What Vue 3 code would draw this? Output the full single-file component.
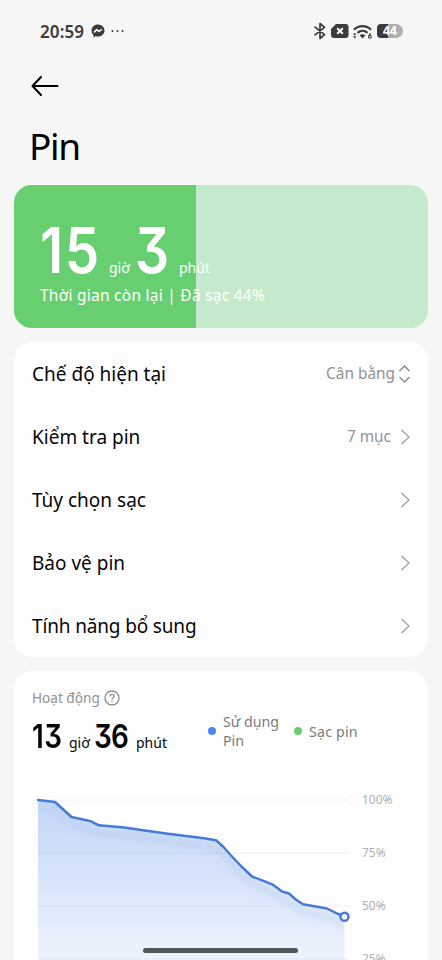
<script setup>
const level = 44

const rows = [
  { label: 'Chế độ hiện tại', value: 'Cân bằng', kind: 'select' },
  { label: 'Kiểm tra pin', value: '7 mục', kind: 'link' },
  { label: 'Tùy chọn sạc', value: '', kind: 'link' },
  { label: 'Bảo vệ pin', value: '', kind: 'link' },
  { label: 'Tính năng bổ sung', value: '', kind: 'link' },
]

const points = [
  [24, 20], [41, 22], [57.5, 37], [77, 41.3], [85, 45.3], [110, 47.6], [150, 53.3], [190, 58.2],
  [202, 60.3], [209, 66.5], [217, 75.5], [227, 86], [238, 96.5], [259, 104.7], [268, 111.5],
  [275, 113.5], [282, 119.7], [289, 124.3], [313, 128.5], [323, 133.5], [330.5, 136.7],
]
const line = 'M' + points.map((p) => p.join(' ')).join('L')
const area = line + 'V200H24Z'
const grid = [
  { y: 20, label: '100%' },
  { y: 73, label: '75%' },
  { y: 126, label: '50%' },
  { y: 179, label: '25%' },
]
</script>

<template>
  <div class="screen">
    <header class="status">
      <span class="clock">20:59</span>
      <svg class="messenger" width="14" height="14" viewBox="0 0 14 14">
        <path d="M7 .4C3.200.4.5 3.100.5 6.600c0 1.900.8 3.500 2.100 4.600v2.200l2-1.100c.8.200 1.500.3 2.400.3 3.800 0 6.500-2.700 6.500-6S10.800.4 7 .4Z" fill="#3b3b3b" />
        <path d="m3 8.300 2.700-2.600 2.200 1.700 3-2.100" fill="none" stroke="#fff" stroke-width="1.600" stroke-linejoin="round" />
      </svg>
      <svg class="dots" width="14" height="4" viewBox="0 0 14 4" fill="#3b3b3b">
        <circle cx="1.500" cy="2" r="1" /><circle cx="6.500" cy="2" r="1" /><circle cx="11.500" cy="2" r="1" />
      </svg>
      <span class="spacer"></span>
      <svg width="12" height="18" viewBox="0 0 12 18">
        <path d="M1 5.200 10.500 12.700 6 16.500V1.500L10.500 5.300 1 12.800" fill="none" stroke="#3b3b3b" stroke-width="1.700" stroke-linejoin="round" stroke-linecap="round" />
      </svg>
      <svg class="sim" width="18" height="14" viewBox="0 0 18 14">
        <path d="M5 0h9.500A3 3 0 0 1 17.500 3v8a3 3 0 0 1-3 3H3a3 3 0 0 1-3-3V5Z" fill="#3b3b3b" />
        <path d="m6.200 4.300 5.600 5.400m0-5.400L6.200 9.700" stroke="#fff" stroke-width="2" />
      </svg>
      <svg class="wifi" width="20" height="16" viewBox="0 0 20 16">
        <g fill="none" stroke="#3b3b3b" stroke-width="2.200">
          <path d="M1 5.700C5.800.9 13.200.9 18 5.700" />
          <path d="M4.500 8.900c3-2.700 7-2.700 10 0" />
        </g>
        <path d="M6.500 11.200q3-2 6 0l-3 3.200Z" fill="#3b3b3b" />
        <path d="M0 11 1.700 8.800 3.400 11ZM0 12.200h3.400L1.700 14.600Z" fill="#3b3b3b" />
        <path d="M17.600 9.200 15.700 12" stroke="#3b3b3b" stroke-width="1.200" />
        <circle cx="16.900" cy="12.700" r="1.400" fill="none" stroke="#3b3b3b" stroke-width="1.100" />
      </svg>
      <span class="battery"><b>{{ level }}</b></span>
    </header>

    <nav class="nav">
      <svg width="28" height="20" viewBox="0 0 28 20">
        <path d="M10 1 1.500 10l8.500 9M1.500 10H26.500" fill="none" stroke="#000" stroke-width="2" stroke-linecap="round" stroke-linejoin="round" />
      </svg>
    </nav>
    <h1 class="title">Pin</h1>

    <section class="hero">
      <div class="fill" :style="{ width: level + '%' }"></div>
      <div class="hero-body">
        <div class="remain">
          <span class="big b15">15</span><span class="unit u1">giờ</span>
          <span class="big b3">3</span><span class="unit u2">phút</span>
        </div>
        <div class="caption">Thời gian còn lại | Đã sạc {{ level }}%</div>
      </div>
    </section>

    <section class="card menu">
      <div v-for="row in rows" :key="row.label" class="row">
        <span class="label">{{ row.label }}</span>
        <span class="value" :class="row.kind">{{ row.value }}</span>
        <svg v-if="row.kind === 'select'" width="13" height="20" viewBox="0 0 13 20">
          <path d="m1.500 7 5-5 5 5m-10 6 5 5 5-5" fill="none" stroke="#8c8c8c" stroke-width="1.500" />
        </svg>
        <svg v-else width="13" height="20" viewBox="0 0 13 20">
          <path d="m3.500 3 7.500 7-7.500 7" fill="none" stroke="#a0a0a0" stroke-width="1.300" />
        </svg>
      </div>
    </section>

    <section class="card activity">
      <div class="heading">
        <span class="heading-text">Hoạt động</span>
        <svg width="16" height="16" viewBox="0 0 16 16" fill="none" stroke="#8c8c8c">
          <circle cx="8" cy="8" r="7" stroke-width="1.300" />
          <path d="M5.900 6.500C5.900 3.600 10.200 3.700 10.100 6.300 10 7.800 8 7.800 8 9.500" stroke-width="1.200" />
          <path d="M8 10.700v1.300" stroke-width="1.300" />
        </svg>
      </div>
      <div class="summary">
        <div class="total">
          <span class="num n13">13</span><span class="small s1">giờ</span>
          <span class="num n36">36</span><span class="small s2">phút</span>
        </div>
        <div class="legend use"><i></i><span>Sử dụng<br />Pin</span></div>
        <div class="legend charge"><i></i><span>Sạc pin</span></div>
      </div>
      <div class="chart">
        <svg width="337" height="190" viewBox="0 0 337 190">
          <defs>
            <linearGradient id="fade" gradientUnits="userSpaceOnUse" x1="0" y1="20" x2="0" y2="200">
              <stop offset="0" stop-color="#c4d7f8" />
              <stop offset="0.500" stop-color="#dae6fa" />
              <stop offset="1" stop-color="#f3f8fe" />
            </linearGradient>
            <filter id="soft" x="-5%" y="-10%" width="110%" height="130%"><feGaussianBlur stdDeviation="3" /></filter>
            <clipPath id="under"><path :d="area" /></clipPath>
          </defs>
          <path :d="area" fill="url(#fade)" />
          <g clip-path="url(#under)">
            <path :d="line" transform="translate(0 8)" fill="none" stroke="#9db9e2" stroke-opacity=".25" stroke-width="6" filter="url(#soft)" />
          </g>
          <path v-for="g in grid" :key="g.y" :d="`M24 ${g.y}H336`" stroke="#6f7f99" stroke-opacity=".2" stroke-dasharray="1 1" />
          <path :d="line" fill="none" stroke="#467bd8" stroke-width="2.500" stroke-linejoin="round" stroke-linecap="round" />
          <circle cx="330.500" cy="136.700" r="4" fill="#fff" stroke="#467bd8" stroke-width="2.400" />
        </svg>
        <div class="axis">
          <span v-for="g in grid" :key="g.label">{{ g.label }}</span>
        </div>
      </div>
    </section>
    <div class="home-bar"></div>
  </div>
</template>

<style>
body {
  background: #f5f5f5;
  overflow: hidden;
}
</style>

<style scoped>
.screen {
  position: relative;
  box-sizing: border-box;
  width: 442px;
  height: 960px;
  overflow: hidden;
  padding: 0 14px;
  background: #f6f6f6;
  color: #060606;
  font-family: "Noto Sans", sans-serif;
}
.status {
  display: flex;
  align-items: center;
  height: 62px;
  padding: 0 25px 0 26px;
}
.clock {
  width: 51px;
  font: 600 17px/20px "Noto Sans", sans-serif;
  letter-spacing: 0.1px;
  padding-top: 1px;
  color: #3b3b3b;
}
.dots { margin-left: 6px; }
.spacer { flex: 1; }
.sim { margin-left: 5px; }
.wifi { margin: 1px 4px 0; }
.battery {
  width: 26px;
  height: 14px;
  border-radius: 4px 7px 7px 4px;
  background: linear-gradient(90deg, #3b3b3b 44%, #aeaeae 44%);
  text-align: center;
  color: #fff;
}
.battery b {
  display: block;
  padding-right: 1px;
  font: 700 11.5px/14px Inter, sans-serif;
  letter-spacing: -0.8px;
}
.nav {
  height: 20px;
  padding: 14px 0 0 17px;
}
.title {
  height: 52px;
  margin: 24px 0 0 15px;
  font: 400 37px/52px "Noto Sans", sans-serif;
  letter-spacing: -1.3px;
  color: #000;
}
.hero {
  display: grid;
  height: 143px;
  margin-top: 13px;
  overflow: hidden;
  border-radius: 18px;
  background: #c4eacb;
  color: #fff;
}
.fill, .hero-body { grid-area: 1 / 1; }
.fill { background: #68cf71; }
.hero-body { padding: 32px 0 0 26px; }
.remain {
  display: flex;
  align-items: baseline;
  height: 67px;
}
.big {
  font: 600 63px/66px Inter, sans-serif;
  font-feature-settings: "cv09";
  transform: scaleX(0.87);
  transform-origin: left;
}
.b15 { width: 69px; letter-spacing: 1.8px; }
.b3 { width: 43px; transform: translateX(-1px) scaleX(0.85); }
.unit { font-size: 14px; }
.u1 { width: 27px; }
.caption {
  font-size: 15.5px;
  letter-spacing: 0.25px;
  line-height: 22px;
  white-space: nowrap;
}
.card {
  border-radius: 18px;
  background: #fefefe;
}
.menu {
  height: 315px;
  margin-top: 14px;
}
.row {
  display: flex;
  align-items: center;
  height: 63px;
  padding: 0 17px 0 18px;
}
.label {
  flex: 1;
  font-size: 19px;
  line-height: 28px;
  white-space: nowrap;
}
.row:last-child .label { letter-spacing: -0.15px; }
.value {
  padding-top: 1px;
  font-size: 15.4px;
  line-height: 24px;
  color: #929292;
}
.value.select { margin-right: 3px; }
.value.link { margin-right: 7px; }
.activity {
  height: 310px;
  margin-top: 14px;
}
.heading {
  display: flex;
  align-items: center;
  gap: 4px;
  padding: 17px 0 0 18px;
  font-size: 13.6px;
  line-height: 20px;
  color: #929292;
}
.summary {
  display: flex;
  height: 52px;
  padding-left: 18px;
}
.total {
  display: flex;
  align-items: baseline;
  width: 176px;
  height: 52px;
  line-height: 52px;
}
.num {
  font: 600 32px/58px Inter, sans-serif;
  font-feature-settings: "cv09";
  transform: scaleX(0.87);
  transform-origin: left;
}
.n13 { width: 37px; letter-spacing: 0.5px; }
.n36 { width: 41px; letter-spacing: -1px; transform: translateX(-1px) scaleX(0.87); }
.small { font-size: 14px; }
.s1 { width: 26px; }
.legend {
  display: flex;
  align-items: center;
  gap: 7px;
  height: 46px;
  font-size: 14.2px;
  line-height: 19px;
  white-space: nowrap;
  color: #7c7c7c;
}
.legend i {
  width: 8px;
  height: 8px;
  border-radius: 50%;
}
.use { width: 86px; }
.use i { background: #4c84ee; }
.charge { letter-spacing: 0.2px; }
.charge i { background: #68cf71; }
.chart {
  display: flex;
  margin-top: 20px;
}
.axis {
  display: flex;
  flex-direction: column;
  padding: 10px 0 0 11px;
  font-size: 12px;
  line-height: 20px;
  gap: 33px;
  color: #b0b0b0;
}
.home-bar {
  position: absolute;
  left: 143px;
  top: 948px;
  width: 155px;
  height: 5px;
  border-radius: 3px;
  background: #505659;
}
</style>
